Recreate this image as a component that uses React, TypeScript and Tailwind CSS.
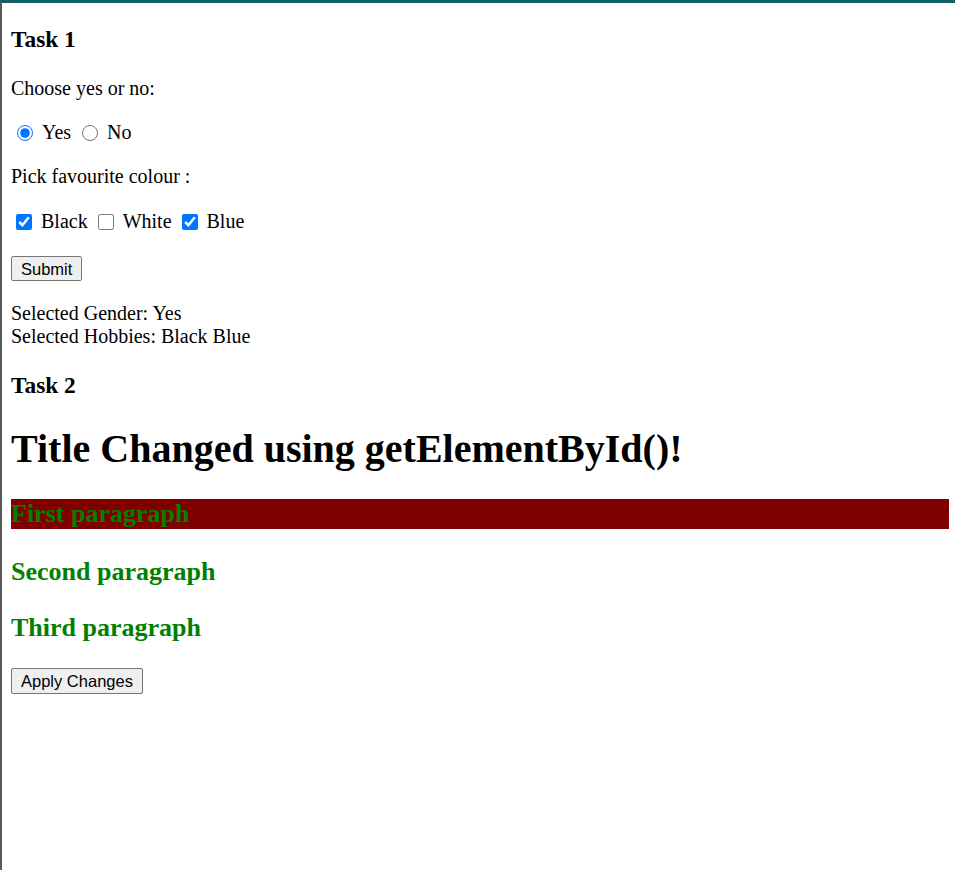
export default function App() {
  return (
    <div
      className="min-h-[870px] border-t-[3px] border-l-2 border-t-[#0f5f64] border-l-[#5a5a5a] bg-white pl-[9px] pr-[6px] text-black"
      style={{ fontFamily: '"Liberation Serif", "Times New Roman", serif' }}
    >
      {/* Task 1 */}
      <h4 className="mt-[23px] text-[23.4px] font-bold leading-[27px]">Task 1</h4>
      <p className="mt-[24px] text-[20px] leading-[23px]">Choose yes or no:</p>
      <div className="mt-[21px] flex items-center text-[20px] leading-[23px]">
        <input type="radio" name="gender" defaultChecked className="ml-[6px] mr-[4px] h-4 w-4 accent-[#0075ff]" />
        <label className="ml-[5px]">Yes</label>
        <input type="radio" name="gender" className="ml-[11px] mr-[4px] h-4 w-4 accent-[#0075ff]" />
        <label className="ml-[5px]">No</label>
      </div>
      <p className="mt-[21px] text-[20px] leading-[23px]">Pick favourite colour :</p>
      <div className="mt-[22px] flex items-center text-[20px] leading-[23px]">
        <input type="checkbox" defaultChecked className="ml-[5px] mr-[4px] h-4 w-4 accent-[#0075ff]" />
        <label className="ml-[5px]">Black</label>
        <input type="checkbox" className="ml-[10px] mr-[4px] h-4 w-4 accent-[#0075ff]" />
        <label className="ml-[5px]">White</label>
        <input type="checkbox" defaultChecked className="ml-[10px] mr-[4px] h-4 w-4 accent-[#0075ff]" />
        <label className="ml-[5px]">Blue</label>
      </div>
      <button
        className="mt-[23px] block h-[25px] rounded-[2px] border border-[#767676] bg-[#efefef] px-[9px] text-[16.5px] leading-[20px]"
        style={{ fontFamily: '"Liberation Sans", Arial, sans-serif' }}
      >
        Submit
      </button>
      <div className="mt-[21px] text-[20px] leading-[23px]">
        <div>Selected Gender: Yes</div>
        <div>Selected Hobbies: Black Blue</div>
      </div>

      {/* Task 2 */}
      <h4 className="mt-[24px] text-[23.4px] font-bold leading-[27px]">Task 2</h4>
      <h1 className="mt-[27px] text-[40px] font-bold leading-[46px]">Title Changed using getElementById()!</h1>
      <h3 className="mt-[27px] bg-[#800000] text-[26px] font-bold leading-[30px] text-[#008000]">First paragraph</h3>
      <h3 className="mt-[28px] text-[26px] font-bold leading-[30px] text-[#008000]">Second paragraph</h3>
      <h3 className="mt-[26px] text-[26px] font-bold leading-[30px] text-[#008000]">Third paragraph</h3>
      <button
        className="mt-[25px] block h-[26px] rounded-[2px] border border-[#767676] bg-[#efefef] px-[9px] text-[16.5px] leading-[20px]"
        style={{ fontFamily: '"Liberation Sans", Arial, sans-serif' }}
      >
        Apply Changes
      </button>
    </div>
  );
}
